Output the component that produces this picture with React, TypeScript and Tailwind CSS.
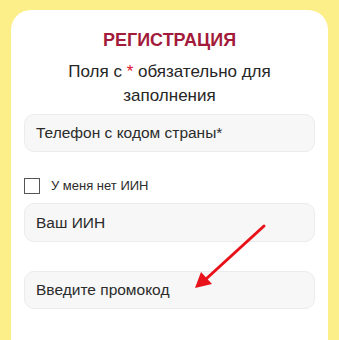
import React from 'react';

const font = { fontFamily: '"Liberation Sans", Arial, sans-serif' };

function Field({ placeholder, className = '' }: { placeholder: string; className?: string }) {
  return (
    <div
      className={`h-[38px] rounded-[10px] border border-[#ececec] bg-[#f7f7f7] flex items-center pl-[11px] text-[15.5px] text-[#2b2b2b] ${className}`}
    >
      {placeholder}
    </div>
  );
}

export default function App() {
  return (
    <div className="relative h-[340px] w-[339px] overflow-hidden bg-[#fcef8a] px-[11px] pt-[10px]" style={font}>
      <div className="h-[360px] rounded-[20px] bg-white px-[13px] pt-[18px]">
        <h1 className="text-center text-[18px] font-bold leading-[24px] text-[#a31b3b]">РЕГИСТРАЦИЯ</h1>
        <p className="mt-[8px] text-center text-[17px] leading-[24px] text-[#262626]">
          Поля с <span className="text-[#e0102c]">*</span> обязательно для
          <br />
          заполнения
        </p>

        <Field placeholder="Телефон с кодом страны*" className="mt-[6px]" />

        <label className="mt-[26px] flex h-[16px] items-center gap-[11px]">
          <span className="h-[16px] w-[16px] border border-[#555] bg-white" />
          <span className="text-[13px] leading-[16px] text-[#2b2b2b]">У меня нет ИИН</span>
        </label>

        <Field placeholder="Ваш ИИН" className="mt-[9px] h-[39px]" />

        <Field placeholder="Введите промокод" className="mt-[29px]" />
      </div>

      {/* red annotation arrow */}
      <svg className="absolute left-0 top-0" width="339" height="340" viewBox="0 0 339 340">
        <line x1="264" y1="226" x2="206" y2="279" stroke="#e8121b" strokeWidth="3" strokeLinecap="round" />
        <polygon points="195,288 201,272 212,284" fill="#e8121b" />
      </svg>
    </div>
  );
}
